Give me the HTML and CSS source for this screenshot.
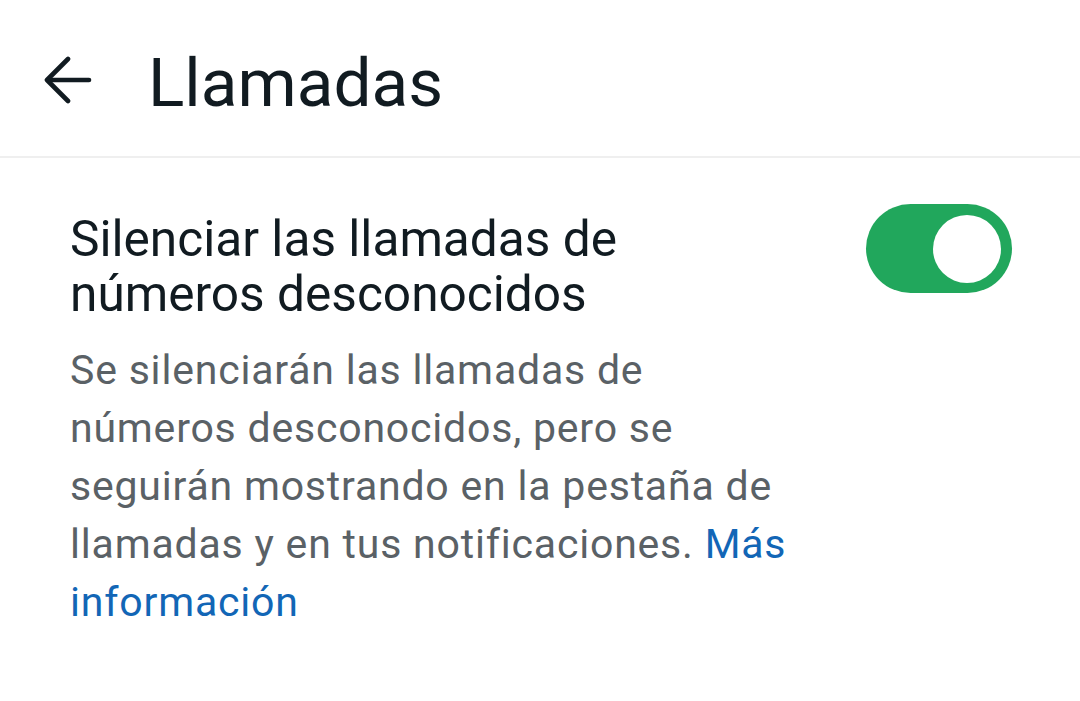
FILE: index.html
```html
<!DOCTYPE html>
<html lang="es">
<head>
<meta charset="utf-8">
<title>Llamadas</title>
<link rel="stylesheet" href="styles.css">
</head>
<body>
<header class="appbar">
  <button class="back" aria-label="Atrás">
    <svg width="48" height="48" viewBox="0 0 48 48" fill="none" stroke="#111b21" stroke-width="4.6" stroke-linecap="round" stroke-linejoin="round">
      <path d="M45 24H4"/>
      <path d="M24 3L3 24l21 21"/>
    </svg>
  </button>
  <h1 class="title">Llamadas</h1>
</header>
<main class="content">
  <section class="setting">
    <div class="setting-text">
      <h2 class="setting-title">Silenciar las llamadas de números desconocidos</h2>
      <p class="setting-desc">Se silenciarán las llamadas de números desconocidos, pero se seguirán mostrando en la pestaña de llamadas y en tus notificaciones. <a class="link" href="#">Más información</a></p>
    </div>
    <div class="switch" role="switch" aria-checked="true">
      <span class="thumb"></span>
    </div>
  </section>
</main>
</body>
</html>
```
FILE: styles.css
```css
html, body {
  margin: 0;
  padding: 0;
  background: #ffffff;
}
body {
  font-family: Roboto, "Noto Sans", sans-serif;
  color: #111b21;
  width: 1080px;
  height: 701px;
  overflow: hidden;
}
.appbar {
  height: 158px;
  border-bottom: 2px solid #efefef;
  display: flex;
  align-items: flex-start;
  box-sizing: border-box;
}
.back {
  background: none;
  border: none;
  padding: 0;
  margin: 56px 0 0 44px;
  width: 48px;
  height: 48px;
  display: flex;
}
.title {
  margin: 0 0 0 56px;
  padding-top: 42px;
  font-size: 67.5px;
  font-weight: 400;
  line-height: 82px;
  letter-spacing: 0;
}
.content {
  padding: 46px 68px 0 70px;
}
.setting {
  display: flex;
  align-items: flex-start;
  gap: 56px;
}
.setting-text {
  flex: 1;
  min-width: 0;
}
.setting-title {
  margin: 8px 0 0 0;
  font-size: 49.6px;
  font-weight: 400;
  line-height: 55px;
  color: #111b21;
}
.setting-desc {
  margin: 19px 0 0 0;
  font-size: 41px;
  line-height: 58px;
  letter-spacing: 0.8px;
  color: #5a6166;
}
.link {
  color: #1266b6;
  text-decoration: none;
}
.switch {
  flex: none;
  width: 146px;
  height: 89px;
  border-radius: 45px;
  background: #21a75c;
  display: flex;
  align-items: center;
  justify-content: flex-end;
  padding-right: 11px;
  box-sizing: border-box;
}
.thumb {
  width: 68px;
  height: 68px;
  border-radius: 50%;
  background: #ffffff;
}
```
